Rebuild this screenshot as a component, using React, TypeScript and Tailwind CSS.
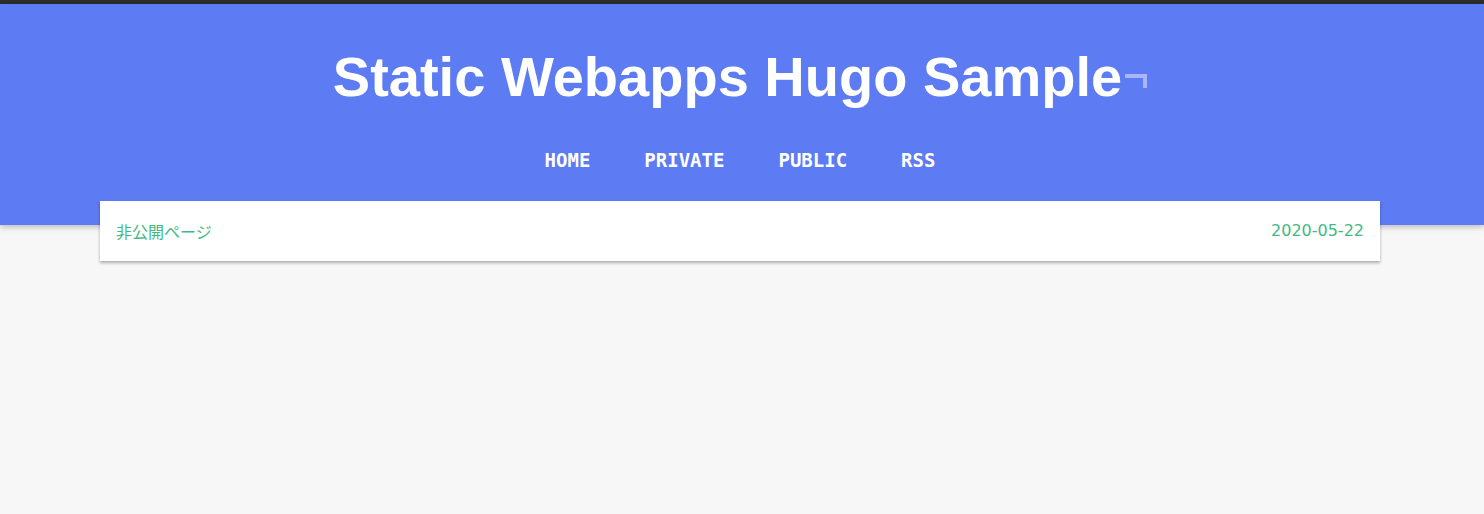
import React from "react";

const navItems = ["HOME", "PRIVATE", "PUBLIC", "RSS"];

const App = () => {
    return (
        <div className="min-h-[514px] bg-[#f7f7f7] border-t-4 border-[#2d2d2d]">
            {/* Header */}
            <header className="relative bg-[#5d7bf2] pt-[39px] pb-[53px] shadow-[0_2px_6px_rgba(0,0,0,0.25)]">
                <div className="w-[1480px]">
                    <h1 className="flex items-start justify-center text-white font-bold text-[56px] leading-[67px] font-['Liberation_Sans',Arial,sans-serif]">
                        <span>Static Webapps Hugo Sample</span>
                        <span className="ml-[3px] mt-[31px] inline-block w-[22px] h-[14px] border-t-4 border-r-4 border-white/45"></span>
                    </h1>

                    {/* Nav */}
                    <nav className="mt-[38px] flex justify-center gap-[54px]">
                        {navItems.map((item) => (
                            <a
                                key={item}
                                href="#"
                                className="text-white font-bold text-[19px] leading-6 font-['DejaVu_Sans_Mono','Liberation_Mono',monospace]"
                            >
                                {item}
                            </a>
                        ))}
                    </nav>
                </div>
            </header>

            {/* Post list */}
            <main className="relative z-10 -mt-6 w-[1480px] px-[100px]">
                <div className="flex h-[60px] items-center justify-between bg-white px-4 shadow-[0_2px_3px_rgba(0,0,0,0.3)]">
                    <a href="#" className="text-[16px] leading-6 -mt-px text-[#42b983] font-['Noto_Sans_CJK_JP',sans-serif]">
                        非公開ページ
                    </a>
                    <span className="text-[16px] leading-6 -mt-px text-[#42b983] font-['DejaVu_Sans','Noto_Sans_CJK_JP',sans-serif]">
                        2020-05-22
                    </span>
                </div>
            </main>
        </div>
    );
};

export default App;
